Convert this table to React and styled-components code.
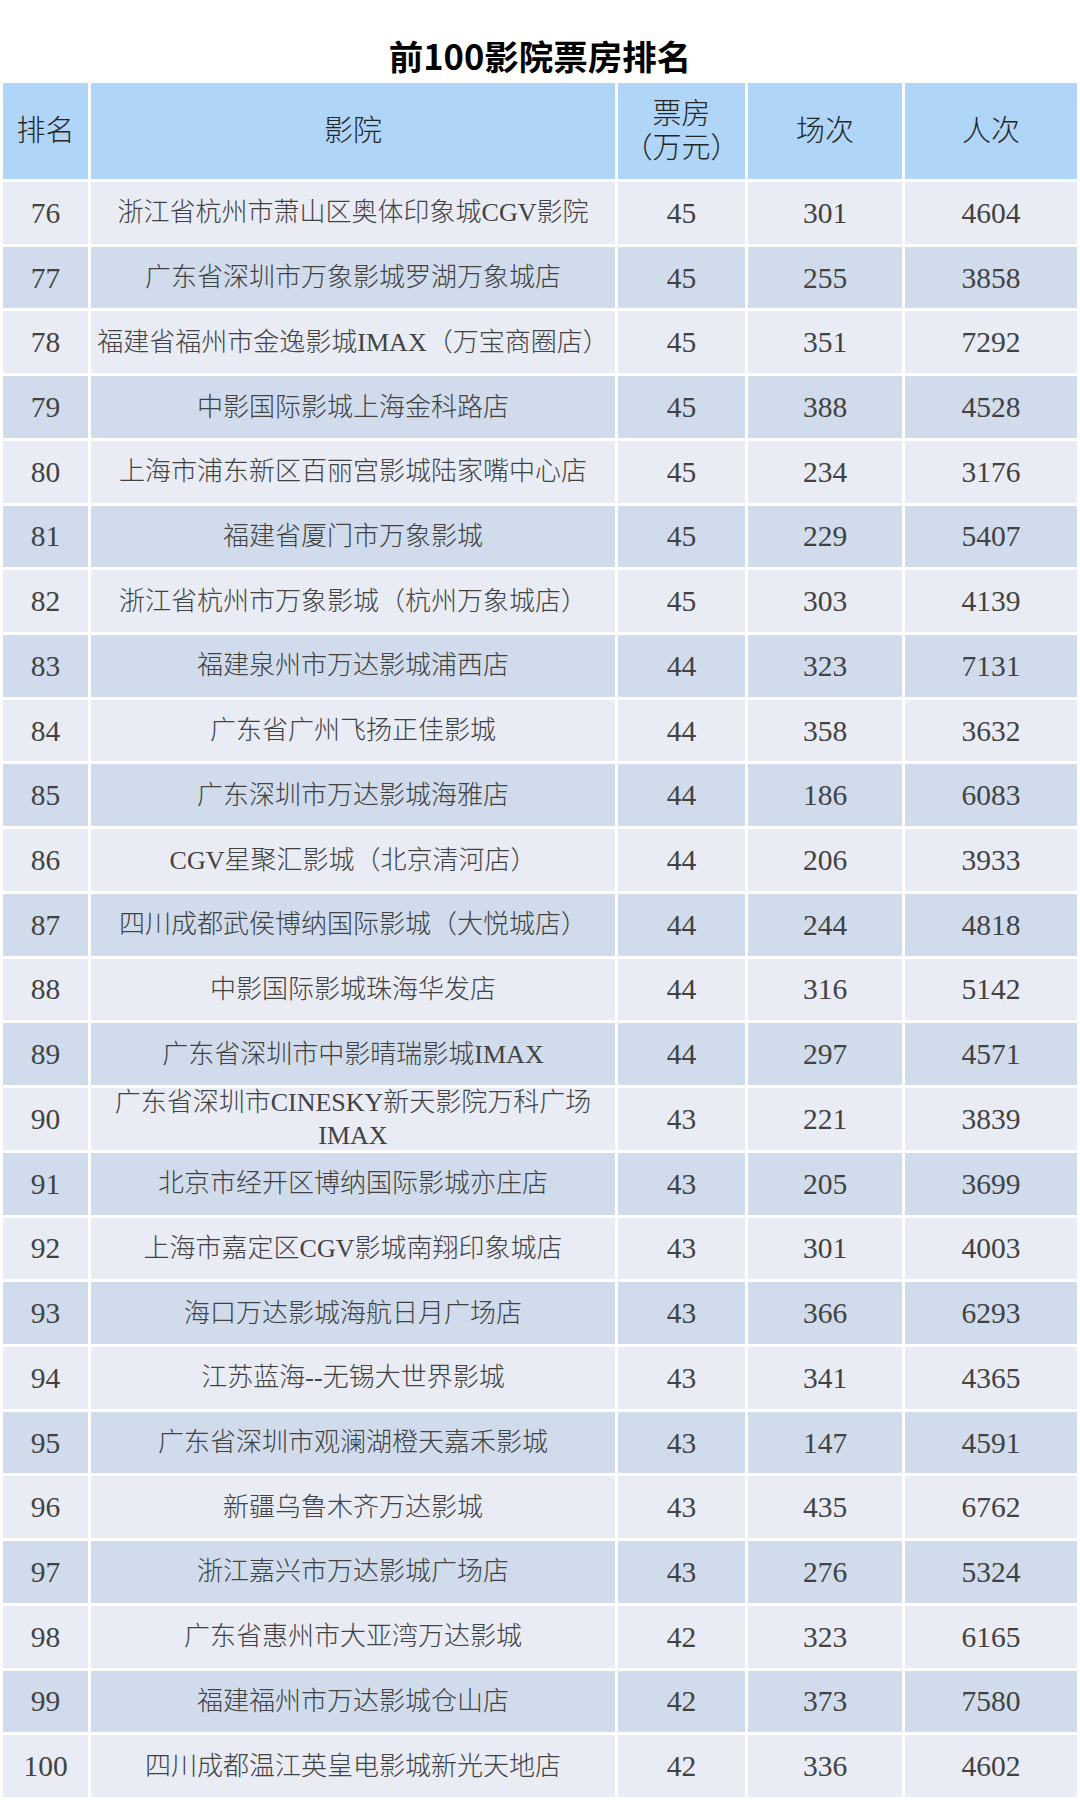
import React from "react";
import styled, { createGlobalStyle } from "styled-components";

const GlobalStyle = createGlobalStyle`
  html, body {
    margin: 0;
    padding: 0;
    background: #ffffff;
  }
  body {
    font-family: "Liberation Serif", "Noto Sans CJK SC", serif;
    color: #333;
  }
`;

const Page = styled.div`
  width: 1080px;
  height: 1800px;
  overflow: hidden;
  background: #fff;
`;

const Title = styled.h1`
  margin: 0;
  height: 80px;
  box-sizing: border-box;
  padding-top: 33px;
  font-family: "Noto Sans CJK SC", "Noto Sans", sans-serif;
  font-weight: 700;
  font-size: 34.5px;
  line-height: 44px;
  text-align: center;
  color: #000;
`;

const Grid = styled.div`
  display: grid;
  grid-template-columns: 85px 524px 127px 154px 172px;
  grid-template-rows: 96px;
  grid-auto-rows: 61.72px;
  gap: 3px;
  padding: 3px;
`;

const HeadCell = styled.div`
  background: #afd5f9;
  display: flex;
  align-items: center;
  justify-content: center;
  text-align: center;
  font-family: "Liberation Serif", "Noto Sans CJK SC", serif;
  font-weight: 300;
  font-size: 29px;
  line-height: 34px;
  color: #262626;
  white-space: pre;
`;

const Cell = styled.div`
  background: ${(p) => (p.$dark ? "#d0dcec" : "#e9ecf5")};
  display: flex;
  align-items: center;
  justify-content: center;
  text-align: center;
  font-family: "Liberation Serif", "Noto Sans CJK SC", serif;
  font-weight: 300;
  font-size: ${(p) => (p.$name ? "26px" : "29.5px")};
  line-height: ${(p) => (p.$name ? "33px" : "30px")};
  color: #424242;
  white-space: pre;
`;

const headers = ["排名", "影院", "票房\n（万元）", "场次", "人次"];

const rows = [
  [76, "浙江省杭州市萧山区奥体印象城CGV影院", 45, 301, 4604],
  [77, "广东省深圳市万象影城罗湖万象城店", 45, 255, 3858],
  [78, "福建省福州市金逸影城IMAX（万宝商圈店）", 45, 351, 7292],
  [79, "中影国际影城上海金科路店", 45, 388, 4528],
  [80, "上海市浦东新区百丽宫影城陆家嘴中心店", 45, 234, 3176],
  [81, "福建省厦门市万象影城", 45, 229, 5407],
  [82, "浙江省杭州市万象影城（杭州万象城店）", 45, 303, 4139],
  [83, "福建泉州市万达影城浦西店", 44, 323, 7131],
  [84, "广东省广州飞扬正佳影城", 44, 358, 3632],
  [85, "广东深圳市万达影城海雅店", 44, 186, 6083],
  [86, "CGV星聚汇影城（北京清河店）", 44, 206, 3933],
  [87, "四川成都武侯博纳国际影城（大悦城店）", 44, 244, 4818],
  [88, "中影国际影城珠海华发店", 44, 316, 5142],
  [89, "广东省深圳市中影晴瑞影城IMAX", 44, 297, 4571],
  [90, "广东省深圳市CINESKY新天影院万科广场\nIMAX", 43, 221, 3839],
  [91, "北京市经开区博纳国际影城亦庄店", 43, 205, 3699],
  [92, "上海市嘉定区CGV影城南翔印象城店", 43, 301, 4003],
  [93, "海口万达影城海航日月广场店", 43, 366, 6293],
  [94, "江苏蓝海--无锡大世界影城", 43, 341, 4365],
  [95, "广东省深圳市观澜湖橙天嘉禾影城", 43, 147, 4591],
  [96, "新疆乌鲁木齐万达影城", 43, 435, 6762],
  [97, "浙江嘉兴市万达影城广场店", 43, 276, 5324],
  [98, "广东省惠州市大亚湾万达影城", 42, 323, 6165],
  [99, "福建福州市万达影城仓山店", 42, 373, 7580],
  [100, "四川成都温江英皇电影城新光天地店", 42, 336, 4602],
];

export default function App() {
  return (
    <Page>
      <GlobalStyle />
      <Title>前100影院票房排名</Title>
      <Grid>
        {headers.map((h) => (
          <HeadCell key={h}>{h}</HeadCell>
        ))}
        {rows.map((r, i) =>
          r.map((v, j) => (
            <Cell key={`${r[0]}-${j}`} $dark={i % 2 === 1} $name={j === 1}>
              {v}
            </Cell>
          ))
        )}
      </Grid>
    </Page>
  );
}
